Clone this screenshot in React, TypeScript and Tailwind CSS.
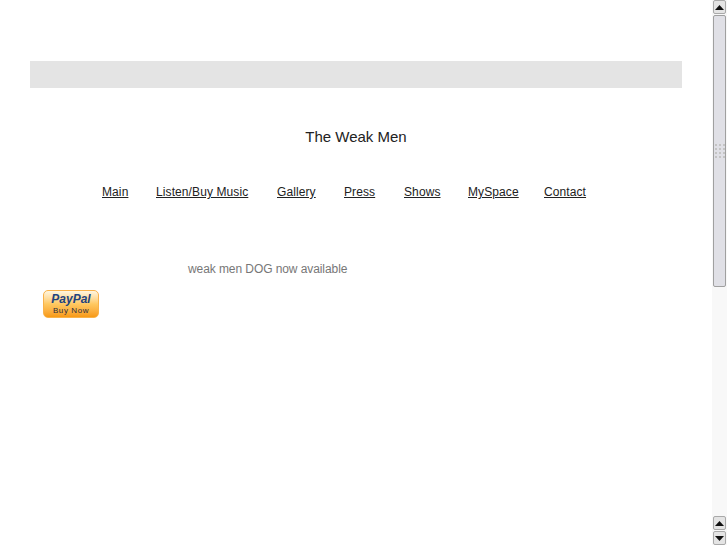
import React from "react";

const links = [
  { t: "Main", w: "w-[54px]" },
  { t: "Listen/Buy Music", w: "w-[121px]" },
  { t: "Gallery", w: "w-[67px]" },
  { t: "Press", w: "w-[60px]" },
  { t: "Shows", w: "w-[64px]" },
  { t: "MySpace", w: "w-[76px]" },
  { t: "Contact", w: "w-auto" },
];

function Arrow({ up }: { up: boolean }) {
  return (
    <div className="h-[14px] w-[13px] rounded-[2px] border border-[#a9a9a9] bg-[#e4e4e4] flex items-center justify-center">
      <svg width="9" height="5" viewBox="0 0 9 5">
        <path d={up ? "M4.5 0L9 5H0z" : "M0 0H9L4.5 5z"} fill="#111" />
      </svg>
    </div>
  );
}

export default function App() {
  return (
    <div className="flex h-[545px] w-[727px] overflow-hidden bg-white font-['Liberation_Sans',sans-serif]">
      <div className="w-[712px] pl-[30px] pr-[30px] pt-[61px]">
        <div className="h-[27px] w-[652px] bg-[#e4e4e4]" />
        <h1 className="mt-[40px] h-[18px] text-center text-[15px] leading-[18px] text-[#222] antialiased">The Weak Men</h1>
        <nav className="mt-[39px] flex h-[15px] pl-[72px] text-[12px] leading-[15px] tracking-[0.1px] text-[#222] antialiased">
          {links.map((l) => (
            <div key={l.t} className={`${l.w} shrink-0`}>
              <a className="underline">{l.t}</a>
            </div>
          ))}
        </nav>
        <p className="mt-[62px] h-[15px] pl-[158px] text-[12px] leading-[15px] tracking-[-0.08px] text-[#777] antialiased">weak men DOG now available</p>
        <div className="ml-[13px] mt-[13px] flex h-[28px] w-[56px] flex-col items-center rounded-[5px] border border-[#f9b24a] bg-gradient-to-b from-[#fff6e0] via-[#ffc860] to-[#f79a12] pt-[2px]">
          <span className="text-[12px] font-bold italic leading-[13px] text-[#22437f]">PayPal</span>
          <span className="text-[8px] leading-[10px] tracking-[0.6px] text-[#2c2c3a]">Buy Now</span>
        </div>
      </div>
      <div className="flex h-[545px] w-[15px] flex-col items-center bg-[#f8f8f8]">
        <Arrow up />
        <div className="mt-[1px] h-[272px] w-[13px] shrink-0 rounded-[2px] border border-[#a0a0a0] bg-[#e0e0e6] flex items-center justify-center">
          <div className="grid grid-cols-3 gap-[2px]">
            {Array.from({ length: 12 }).map((_, i) => (
              <div key={i} className="h-[2px] w-[2px] bg-[#c4c4c4]" />
            ))}
          </div>
        </div>
        <div className="flex-1" />
        <Arrow up />
        <div className="h-[1px]" />
        <Arrow up={false} />
      </div>
    </div>
  );
}
